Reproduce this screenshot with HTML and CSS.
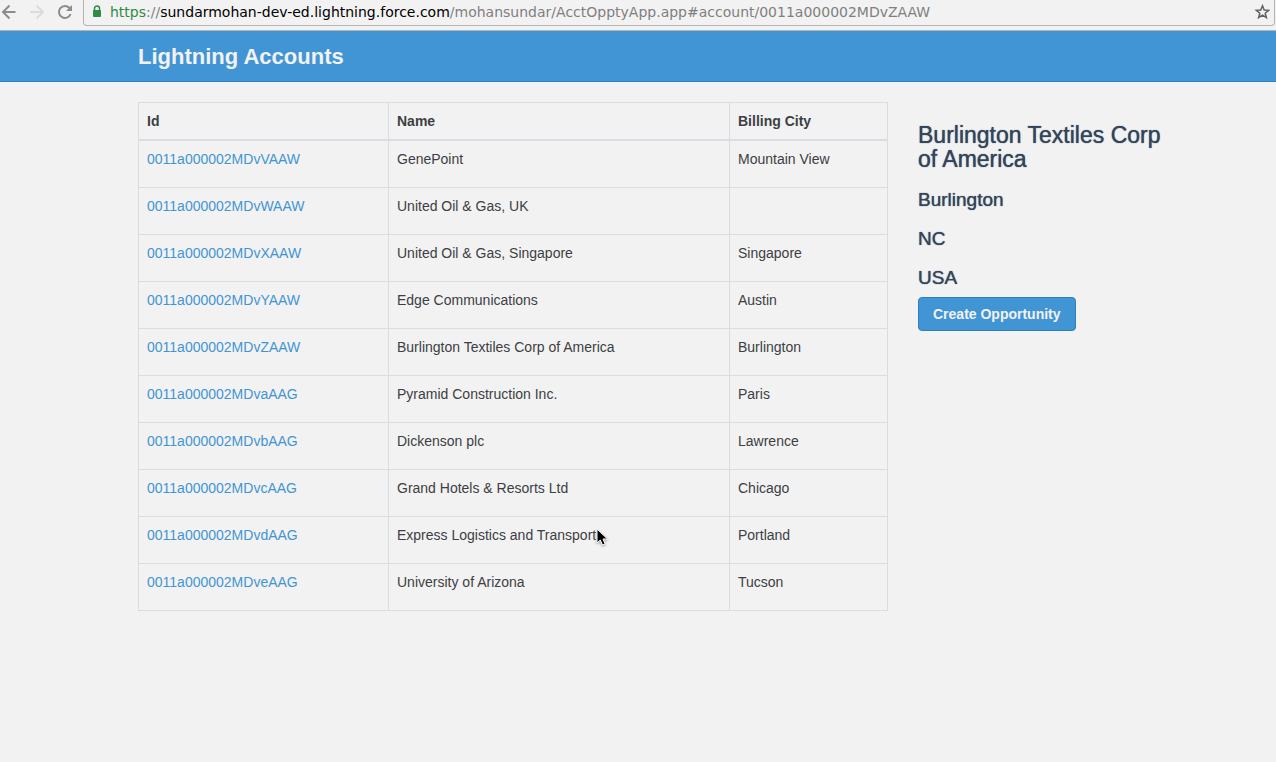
FILE: index.html
```html
<!DOCTYPE html>
<html lang="en">
<head>
<meta charset="utf-8">
<title>Lightning Accounts</title>
<link rel="stylesheet" href="styles.css">
</head>
<body>
<div class="toolbar">
  <button class="tool" aria-label="Back"><svg width="16" height="16" viewBox="0 0 16 16"><path d="M15.500 8H3M9.500 1.500 3 8l6.500 6.500"/></svg></button>
  <button class="tool tool-off" aria-label="Forward" disabled><svg width="16" height="16" viewBox="0 0 16 16"><path d="M2 8h13M8.500 1.500 15 8l-6.500 6.500"/></svg></button>
  <button class="tool" aria-label="Reload"><svg width="16" height="16" viewBox="0 0 16 16"><path d="M14.600 10A6 6 0 1 1 13.500 4L15 5.500"/><path class="solid" d="M16 1v6h-6z"/></svg></button>
  <div class="address">
    <svg class="lock" width="10" height="13" viewBox="0 0 10 13"><path d="M2.500 6V3.500a2.500 2.500 0 0 1 5 0V6" fill="none" stroke="#2f8a43" stroke-width="1.500"/><rect x="1" y="5" width="8" height="7" rx="1" fill="#2f8a43"/></svg>
    <div class="url"><span class="scheme">https</span>://<span class="host">sundarmohan-dev-ed.lightning.force.com</span>/mohansundar/AcctOpptyApp.app#account/0011a000002MDvZAAW</div>
    <button class="star" aria-label="Bookmark this page"><svg width="16" height="16" viewBox="0 0 16 16"><path d="M8.500 1.800 10.200 6l4.500.300-3.500 2.900 1.200 4.500L8.500 11.200l-3.900 2.500 1.200-4.500L2.300 6.300 6.800 6z"/></svg></button>
  </div>
</div>
<header class="banner"><h1 class="brand">Lightning Accounts</h1></header>
<main class="content">
  <table class="accounts">
    <colgroup><col class="col-id"><col class="col-name"><col class="col-city"></colgroup>
    <thead><tr><th>Id</th><th>Name</th><th>Billing City</th></tr></thead>
    <tbody>
      <tr><td><a href="#account/0011a000002MDvVAAW">0011a000002MDvVAAW</a></td><td>GenePoint</td><td>Mountain View</td></tr>
      <tr><td><a href="#account/0011a000002MDvWAAW">0011a000002MDvWAAW</a></td><td>United Oil &amp; Gas, UK</td><td></td></tr>
      <tr><td><a href="#account/0011a000002MDvXAAW">0011a000002MDvXAAW</a></td><td>United Oil &amp; Gas, Singapore</td><td>Singapore</td></tr>
      <tr><td><a href="#account/0011a000002MDvYAAW">0011a000002MDvYAAW</a></td><td>Edge Communications</td><td>Austin</td></tr>
      <tr><td><a href="#account/0011a000002MDvZAAW">0011a000002MDvZAAW</a></td><td>Burlington Textiles Corp of America</td><td>Burlington</td></tr>
      <tr><td><a href="#account/0011a000002MDvaAAG">0011a000002MDvaAAG</a></td><td>Pyramid Construction Inc.</td><td>Paris</td></tr>
      <tr><td><a href="#account/0011a000002MDvbAAG">0011a000002MDvbAAG</a></td><td>Dickenson plc</td><td>Lawrence</td></tr>
      <tr><td><a href="#account/0011a000002MDvcAAG">0011a000002MDvcAAG</a></td><td>Grand Hotels &amp; Resorts Ltd</td><td>Chicago</td></tr>
      <tr><td><a href="#account/0011a000002MDvdAAG">0011a000002MDvdAAG</a></td><td>Express Logistics and Transport</td><td>Portland</td></tr>
      <tr><td><a href="#account/0011a000002MDveAAG">0011a000002MDveAAG</a></td><td>University of Arizona</td><td>Tucson</td></tr>
    </tbody>
  </table>
  <aside class="detail">
    <h2 class="detail-name">Burlington Textiles Corp of America</h2>
    <h3 class="detail-line">Burlington</h3>
    <h3 class="detail-line">NC</h3>
    <h3 class="detail-line">USA</h3>
    <button class="create">Create Opportunity</button>
  </aside>
</main>
<svg class="cursor" width="13" height="20" viewBox="0 0 13 20"><path d="M1 1v14l3.300-3 2.200 5 2.600-1.100L7 11h4.500z" fill="#000" stroke="#fff" stroke-width="1"/></svg>
</body>
</html>
```
FILE: styles.css
```css
* { box-sizing: border-box; }

body {
  margin: 0;
  min-height: 100vh;
  background: #f2f2f2;
  color: #3c4043;
  font: 14px/20px "Liberation Sans", Arial, sans-serif;
}

button { font: inherit; cursor: pointer; }

/* Browser toolbar */
.toolbar {
  display: flex;
  align-items: flex-start;
  gap: 12px;
  height: 31px;
  padding-right: 1px;
  border-bottom: 1px solid #b4b4b4;
}

.tool, .star {
  display: flex;
  flex: none;
  padding: 0;
  border: 0;
  background: none;
  fill: none;
  stroke: #8c8c8c;
  stroke-width: 2;
}

.tool { padding-top: 4px; }
.tool-off { stroke: #dcdcdc; }
.solid { fill: #8c8c8c; stroke: none; }

.address {
  display: flex;
  flex: 1;
  align-items: center;
  gap: 8px;
  min-width: 0;
  height: 26px;
  margin-left: -1px;
  padding: 0 4px 2px 8px;
  border: 1px solid #b4b4b4;
  border-top: 0;
  border-radius: 0 0 4px 4px;
}

.lock { flex: none; }

.url {
  flex: 1;
  overflow: hidden;
  color: #808080;
  font: 14px/20px "DejaVu Sans", sans-serif;
  white-space: nowrap;
}

.scheme { color: #2f8a43; }
.host { color: #000; }
.star { stroke: #606060; stroke-width: 1.5; }

/* Application header */
.banner {
  padding: 11px 138px 9px;
  border-bottom: 1px solid #2f81bb;
  background: #4295d4;
}

.brand {
  margin: 0;
  color: #f2f2f2;
  font-size: 22px;
  line-height: 30px;
}

/* Account list and detail */
.content {
  display: grid;
  grid-template-columns: 3fr 1fr;
  align-items: start;
  gap: 30px;
  padding: 20px 108px 20px 138px;
}

.accounts {
  width: 100%;
  border-collapse: collapse;
  table-layout: fixed;
}

.col-id { width: 250px; }
.col-name { width: 341px; }

.accounts th, .accounts td {
  padding: 8px 8px 18px;
  border: 1px solid #d9dde3;
  text-align: left;
  vertical-align: top;
}

.accounts th {
  padding-bottom: 8px;
  border-bottom-width: 2px;
}

.accounts a { color: #4295d4; text-decoration: none; }

.detail { padding-top: 21px; color: #34445a; }

.detail-name, .detail-line {
  margin: 0;
  font-weight: 400;
  text-shadow: 0 0 1px #34445a;
}

.detail-name { margin-bottom: 19px; font-size: 23px; line-height: 24px; }
.detail-line { margin-bottom: 19px; font-size: 19px; line-height: 20px; }
.detail-line:last-of-type { margin-bottom: 9px; }

.create {
  padding: 6px 14px;
  border: 1px solid #2f81bb;
  border-radius: 4px;
  background: #4295d4;
  color: #f2f2f2;
  font-weight: 700;
}

.cursor {
  position: absolute;
  top: 528px;
  left: 596px;
  filter: drop-shadow(0 1px 1px #999);
}
```
